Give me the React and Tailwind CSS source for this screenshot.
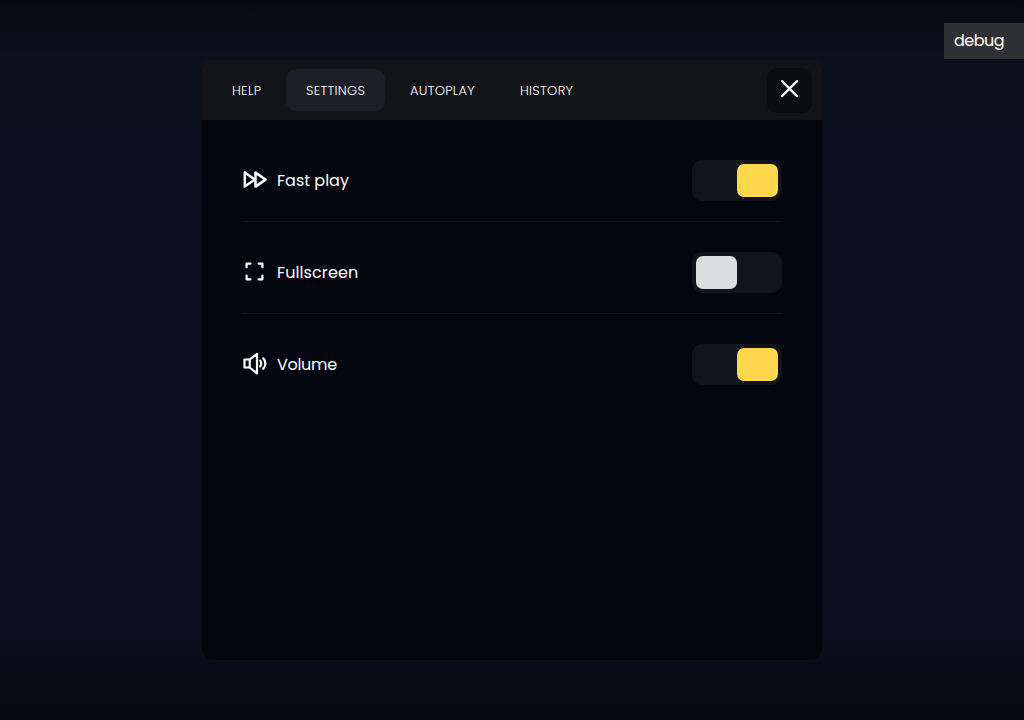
const TABS = [
  { label: "HELP", box: "w-[69px]" },
  { label: "SETTINGS", box: "w-[99px] bg-[#1c1f27]" },
  { label: "AUTOPLAY", box: "w-[105px]" },
  { label: "HISTORY", box: "w-[93px]" },
];

function FastIcon() {
  return (
    <svg width="25" height="25" viewBox="0 0 25 25" fill="none" stroke="white" strokeWidth="2.5" strokeLinejoin="round">
      <path d="M2.8 5.6v14l10-7z" />
      <path d="M13.5 5.6v14l10.1-7z" />
    </svg>
  );
}

function FullscreenIcon() {
  return (
    <svg width="25" height="25" viewBox="0 0 25 25" fill="none" stroke="white" strokeWidth="2.2" strokeLinecap="round" strokeLinejoin="round">
      <path d="M4.6 8.2V4.6h3.9M16.5 4.6h3.9v3.6M20.4 16.6v3.7h-3.9M8.5 20.3H4.6v-3.7" />
    </svg>
  );
}

function VolumeIcon() {
  return (
    <svg width="25" height="25" viewBox="0 0 25 25" fill="none" stroke="white" strokeWidth="2.2" strokeLinejoin="round" strokeLinecap="round">
      <path d="M2.5 8.5h5.2L15 2.8v19.6l-7.3-5.9H2.5zM7.7 8.5v8" />
      <path d="M18.2 9.6q2.2 2.9 0 5.8M21.3 7.3q4.2 5.2 0 10.4" />
    </svg>
  );
}

const ROWS = [
  { label: "Fast play", Icon: FastIcon, on: true, text: "tracking-normal" },
  { label: "Fullscreen", Icon: FullscreenIcon, on: false, text: "tracking-[0.1px]" },
  { label: "Volume", Icon: VolumeIcon, on: true, text: "tracking-[-0.3px]" },
];

function Toggle({ on }) {
  return (
    <button className={`flex h-[41px] w-[90px] rounded-[10px] bg-[#111418] p-1 ${on ? "justify-end" : "justify-start"}`}>
      <span className={`h-[33px] w-[41px] rounded-[7px] ${on ? "bg-[#ffd74d]" : "bg-[#dcdddf]"}`} />
    </button>
  );
}

export default function App() {
  return (
    <div className="relative flex h-[720px] w-full items-center justify-center overflow-hidden bg-[linear-gradient(180deg,#070812_0%,#0b101d_8%,#0a101e_50%,#0a101d_88%,#070812_100%)] font-[Poppins,Inter,sans-serif] font-normal text-white">
      <div className="flex h-[600px] w-[620px] flex-col overflow-hidden rounded-[10px] bg-linear-to-b from-[#03060e] from-92% to-[#04060a]">
        <header className="flex h-[60px] shrink-0 items-center justify-between bg-[#121418] px-2.5">
          <nav className="flex gap-[5px]">
            {TABS.map((t) => (
              <button key={t.label} className={`flex h-[42px] items-center rounded-[10px] pt-px pl-5 text-[13px] font-light tracking-[0.28px] whitespace-nowrap ${t.box}`}>
                {t.label}
              </button>
            ))}
          </nav>
          <button aria-label="Close" className="flex size-[45px] items-center justify-center rounded-[10px] bg-[#0c0d10] pb-1">
            <svg width="19" height="19" viewBox="0 0 19 19" fill="none" stroke="white" strokeWidth="2.2" strokeLinecap="round">
              <path d="M2 2.1l15 15M17 2.1l-15 15" />
            </svg>
          </button>
        </header>
        <main className="px-10 pt-2.5">
          {ROWS.map(({ label, Icon, on, text }) => (
            <div key={label} className="flex items-center justify-between border-b border-[#101319] pt-[30px] pb-5 last:border-b-0">
              <div className="flex items-center gap-2.5">
                <div className="pb-[3px]"><Icon /></div>
                <span className={`text-base ${text}`}>{label}</span>
              </div>
              <Toggle on={on} />
            </div>
          ))}
        </main>
      </div>
      <div className="absolute top-[23px] right-0 flex h-9 w-20 items-center bg-[#303135] pl-2.5 text-base tracking-[-0.5px]">debug</div>
    </div>
  );
}
